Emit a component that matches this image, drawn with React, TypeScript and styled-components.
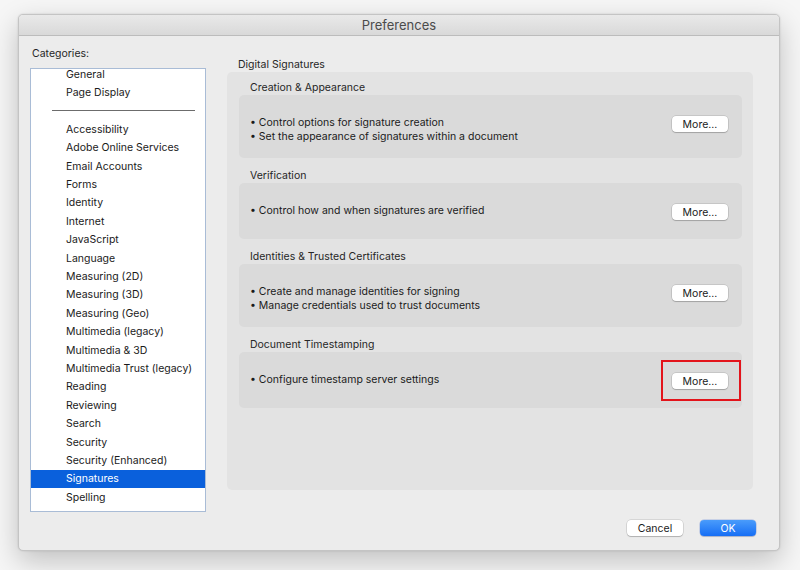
import styled, { createGlobalStyle } from 'styled-components'

const GlobalStyle = createGlobalStyle`
    html, body {
        margin: 0;
        padding: 0;
        background: #f6f6f6;
    }
    * {
        box-sizing: border-box;
    }
`

type Category = { label: string; separator?: boolean; selected?: boolean }

const categories: Category[] = [
    { label: 'General' },
    { label: 'Page Display' },
    { label: '', separator: true },
    { label: 'Accessibility' },
    { label: 'Adobe Online Services' },
    { label: 'Email Accounts' },
    { label: 'Forms' },
    { label: 'Identity' },
    { label: 'Internet' },
    { label: 'JavaScript' },
    { label: 'Language' },
    { label: 'Measuring (2D)' },
    { label: 'Measuring (3D)' },
    { label: 'Measuring (Geo)' },
    { label: 'Multimedia (legacy)' },
    { label: 'Multimedia & 3D' },
    { label: 'Multimedia Trust (legacy)' },
    { label: 'Reading' },
    { label: 'Reviewing' },
    { label: 'Search' },
    { label: 'Security' },
    { label: 'Security (Enhanced)' },
    { label: 'Signatures', selected: true },
    { label: 'Spelling' },
]

const groups = [
    {
        title: 'Creation & Appearance',
        lines: ['Control options for signature creation', 'Set the appearance of signatures within a document'],
    },
    { title: 'Verification', lines: ['Control how and when signatures are verified'] },
    {
        title: 'Identities & Trusted Certificates',
        lines: ['Create and manage identities for signing', 'Manage credentials used to trust documents'],
    },
    { title: 'Document Timestamping', lines: ['Configure timestamp server settings'], highlight: true },
]

const App = () => {
    return (
        <Page>
            <GlobalStyle />
            <Window>
                <TitleBar>Preferences</TitleBar>
                <Body>
                    <LeftColumn>
                        <Label>Categories:</Label>
                        <List>
                            <ListInner>
                                {categories.map((c, i) =>
                                    c.separator ? (
                                        <SeparatorRow key={i}>
                                            <SeparatorLine />
                                        </SeparatorRow>
                                    ) : (
                                        <ListRow key={i} selected={!!c.selected}>
                                            {c.label}
                                        </ListRow>
                                    ),
                                )}
                            </ListInner>
                        </List>
                    </LeftColumn>
                    <RightColumn>
                        <SectionLabel>Digital Signatures</SectionLabel>
                        <Panel>
                            {groups.map((g) => (
                                <Group key={g.title}>
                                    <GroupTitle>{g.title}</GroupTitle>
                                    <GroupBox tall={g.lines.length > 1}>
                                        <Lines>
                                            {g.lines.map((l) => (
                                                <Line key={l}>• {l}</Line>
                                            ))}
                                        </Lines>
                                        <ButtonWrap>
                                            <MoreButton>More...</MoreButton>
                                            {g.highlight && <Highlight />}
                                        </ButtonWrap>
                                    </GroupBox>
                                </Group>
                            ))}
                        </Panel>
                    </RightColumn>
                </Body>
                <Footer>
                    <PushButton>Cancel</PushButton>
                    <PushButton primary>OK</PushButton>
                </Footer>
            </Window>
        </Page>
    )
}

export default App

const font = `Inter, "Noto Sans", "Liberation Sans", sans-serif`

const Page = styled.div`
    width: 800px;
    height: 570px;
    padding: 14px 0 0 18px;
    overflow: hidden;
    font-family: ${font};
`

const Window = styled.div`
    width: 762px;
    height: 537px;
    display: flex;
    flex-direction: column;
    background: #ececec;
    border: 1px solid #c4c4c4;
    border-radius: 5px;
    box-shadow: 0 10px 28px rgba(0, 0, 0, 0.22), 0 0 2px rgba(0, 0, 0, 0.15);
    overflow: hidden;
`

const TitleBar = styled.div`
    height: 21px;
    flex-shrink: 0;
    display: flex;
    align-items: center;
    justify-content: center;
    background: linear-gradient(#e9e9e9, #d9d9d9);
    border-bottom: 1px solid #bcbcbc;
    font-size: 13px;
    color: #4b4b4b;
`

const Body = styled.div`
    display: grid;
    grid-template-columns: 176px 526px;
    column-gap: 21px;
    padding-left: 11px;
`

const LeftColumn = styled.div`
    display: flex;
    flex-direction: column;
    padding-top: 11px;
`

const Label = styled.div`
    height: 14px;
    line-height: 14px;
    font-size: 10.5px;
    color: #262626;
    padding-left: 2px;
    margin-bottom: 7px;
`

const List = styled.div`
    height: 444px;
    background: #ffffff;
    border: 1px solid #a9bcd6;
    overflow: hidden;
`

const ListInner = styled.div`
    margin-top: -4px;
`

const ListRow = styled.div<{ selected: boolean }>`
    height: 18.4px;
    display: flex;
    align-items: center;
    padding-left: 35px;
    font-size: 10.5px;
    color: ${(props) => (props.selected ? '#ffffff' : '#1a1a1a')};
    background: ${(props) => (props.selected ? '#0a60dc' : 'transparent')};
    white-space: nowrap;
`

const SeparatorRow = styled.div`
    height: 18.4px;
    display: flex;
    align-items: center;
    padding: 0 10px 0 21px;
`

const SeparatorLine = styled.div`
    flex: 1;
    height: 1px;
    background: #6c6c6c;
`

const RightColumn = styled.div`
    display: flex;
    flex-direction: column;
    padding-top: 22px;
`

const SectionLabel = styled.div`
    height: 14px;
    line-height: 14px;
    font-size: 10.5px;
    color: #262626;
    padding-left: 11px;
`

const Panel = styled.div`
    height: 418px;
    background: #e3e3e3;
    border-radius: 5px;
    padding: 9px 11px 0 12px;
    display: flex;
    flex-direction: column;
    gap: 11px;
`

const Group = styled.div`
    display: flex;
    flex-direction: column;
`

const GroupTitle = styled.div`
    height: 14px;
    line-height: 14px;
    font-size: 10.5px;
    color: #262626;
    padding-left: 11px;
`

const GroupBox = styled.div<{ tall: boolean }>`
    height: ${(props) => (props.tall ? '63px' : '56px')};
    background: #dadada;
    border-radius: 5px;
    display: flex;
    align-items: flex-start;
    justify-content: space-between;
    padding: 20px 14px 0 11px;
`

const Lines = styled.div`
    display: flex;
    flex-direction: column;
    padding-top: 1px;
`

const Line = styled.div`
    height: 14px;
    line-height: 14px;
    font-size: 10.5px;
    color: #1a1a1a;
    white-space: nowrap;
`

const ButtonWrap = styled.div`
    position: relative;
    display: flex;
    margin-top: 1px;
`

const MoreButton = styled.button`
    width: 56px;
    height: 16px;
    padding: 0;
    border: none;
    border-radius: 4px;
    background: #ffffff;
    box-shadow: 0 0 0 0.5px rgba(0, 0, 0, 0.18), 0 1px 1px rgba(0, 0, 0, 0.18);
    font-family: ${font};
    font-size: 10.5px;
    color: #1a1a1a;
`

const Highlight = styled.div`
    position: absolute;
    top: -13px;
    left: -11px;
    right: -13px;
    bottom: -12px;
    border: 2px solid #e3141b;
    pointer-events: none;
`

const Footer = styled.div`
    margin-top: auto;
    display: flex;
    justify-content: flex-end;
    gap: 17px;
    padding: 0 23px 14px 0;
`

const PushButton = styled.button<{ primary?: boolean }>`
    width: 56px;
    height: 16px;
    padding: 0;
    border: none;
    border-radius: 4px;
    background: ${(props) => (props.primary ? 'linear-gradient(#4a9cfb, #166ef5)' : '#ffffff')};
    box-shadow: ${(props) =>
        props.primary
            ? '0 0 0 0.5px rgba(0, 60, 200, 0.3), 0 1px 1px rgba(0, 0, 0, 0.15)'
            : '0 0 0 0.5px rgba(0, 0, 0, 0.18), 0 1px 1px rgba(0, 0, 0, 0.18)'};
    font-family: ${font};
    font-size: 10.5px;
    color: ${(props) => (props.primary ? '#ffffff' : '#1a1a1a')};
`
